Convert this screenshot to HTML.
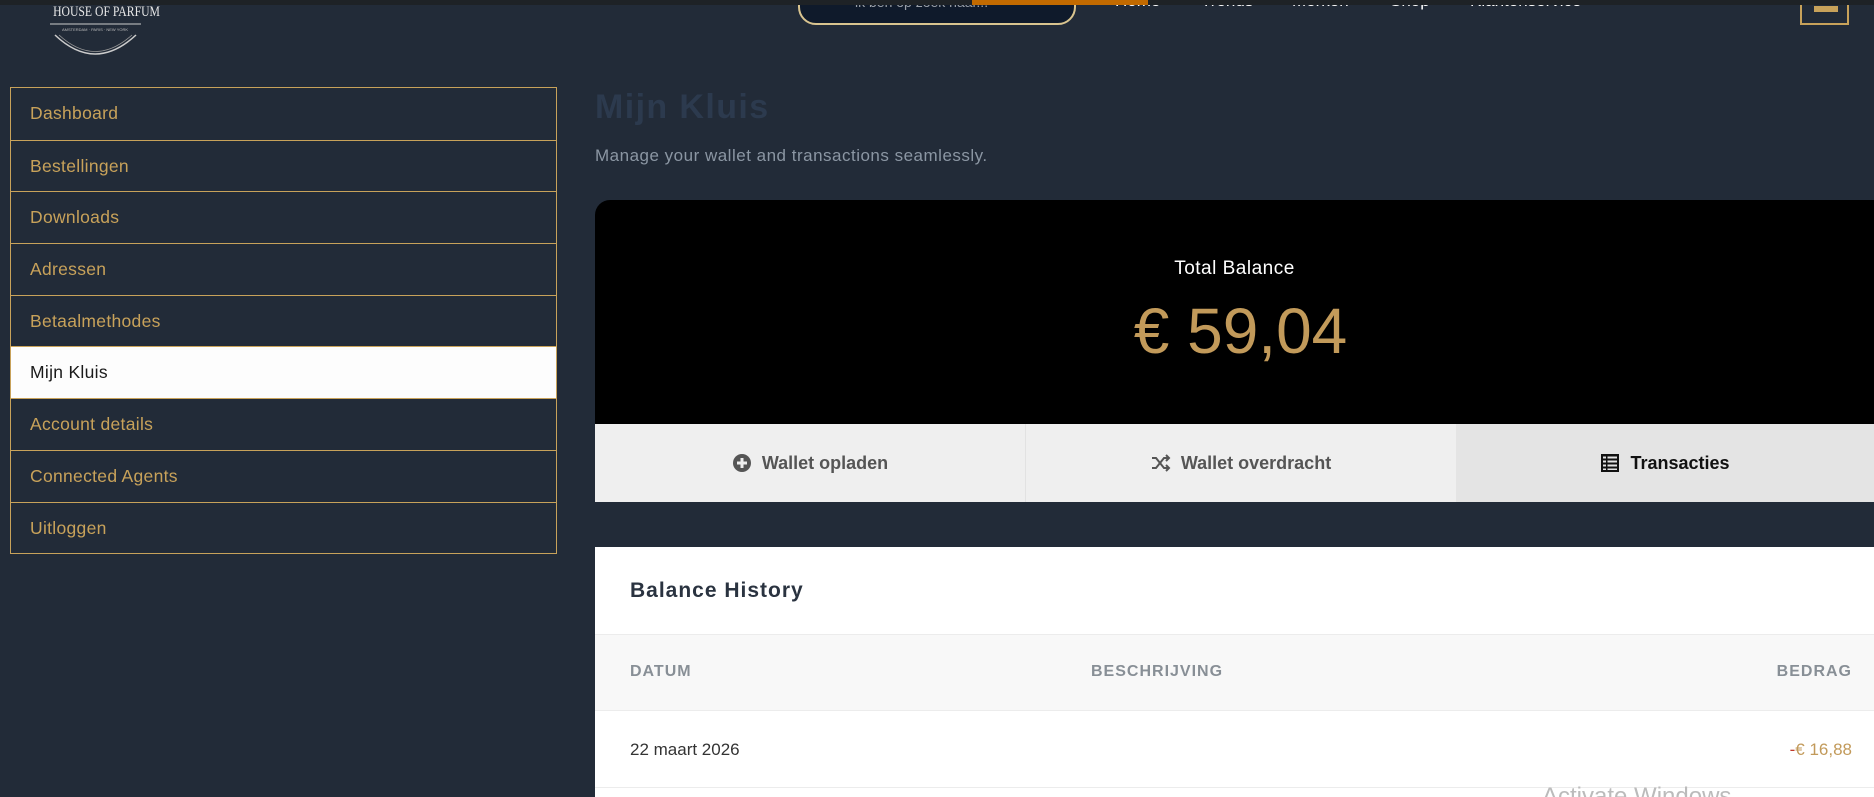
<!DOCTYPE html>
<html><head><meta charset="utf-8">
<style>
*{margin:0;padding:0;box-sizing:border-box}
html,body{width:1874px;height:797px;overflow:hidden}
body{background:#222b38;font-family:"Liberation Sans",sans-serif;position:relative}
.abs{position:absolute}
.topbar{left:0;top:0;width:1874px;height:5px;background:#1e2226;z-index:5}
.orange{left:972px;top:0;width:176px;height:5px;background:#c26a00;z-index:6}
.logo{left:38px;top:4px;width:115px;color:#e8e8e8;font-family:"Liberation Serif",serif;font-size:15px;text-align:center;white-space:nowrap}
.logo span{display:inline-block;transform:scaleX(0.78);transform-origin:center}
.search{left:798px;top:-20px;width:278px;height:45px;border:2px solid #d9c48f;border-radius:18px;background:#0f1a2b;color:#9aa0a8;font-size:14px;padding:12px 0 0 55px}
.nav{top:-9px;color:#fff;font-size:17px}
.ham{left:1800px;top:-10px;width:49px;height:35px;border:2px solid #c8a25a}
.ham i{position:absolute;left:12px;top:14px;width:24px;height:6px;background:#c8a25a}
.side{left:10px;top:87px;width:547px;border:1px solid #c8a25a}
.side div{height:51.7px;border-top:1px solid #c8a25a;color:#c8a25a;font-size:17.5px;padding-left:19px;line-height:50px;letter-spacing:0.3px}
.side div:first-child{border-top:none}
.side div.act{background:#fdfdfd;color:#1a1a1a}
h1{position:absolute;left:595px;top:88px;font-size:34px;color:#2c3a4e;font-weight:bold;letter-spacing:1.4px}
.sub{left:595px;top:146px;font-size:17px;color:#8b96a3;letter-spacing:0.5px}
.card{left:595px;top:200px;width:1279px;height:224px;background:#000;border-radius:15px 0 0 0}
.tb{left:595px;top:258px;width:1279px;text-align:center;color:#fff;font-size:19px;letter-spacing:0.5px}
.amt{left:595px;top:294px;width:1279px;text-align:center;color:#c29a5a;font-size:64px;padding-left:12px}
.btn{top:424px;height:78px;background:#efefef;color:#555;font-size:18px;font-weight:bold;display:flex;align-items:center;justify-content:center;gap:10px}
.hist{left:595px;top:547px;width:1279px;height:260px;background:#fff}
.ht{left:630px;top:579px;font-size:21px;font-weight:bold;color:#2a3340;letter-spacing:1px}
.thead{left:595px;top:634px;width:1279px;height:77px;background:#f8f8f8;border-top:1px solid #ececec;border-bottom:1px solid #ececec}
.th{top:663px;font-size:16px;font-weight:bold;color:#888f96;letter-spacing:1px}
.td{top:740px;font-size:17px;color:#333}
.rowline{left:595px;top:787px;width:1279px;height:1px;background:#ececec}
</style></head><body>
<div class="abs topbar"></div><div class="abs orange"></div>
<div class="abs logo"><span>HOUSE OF PARFUM</span>
<svg width="115" height="40" style="display:block;margin-top:0"><line x1="12" y1="3" x2="103" y2="3" stroke="#ccc" stroke-width="1"/><text x="57" y="10" font-size="4" fill="#bbb" text-anchor="middle" font-family="Liberation Sans">AMSTERDAM · PARIS · NEW YORK</text><path d="M17 14 Q57 52 98 14" fill="none" stroke="#ccc" stroke-width="1.5"/><path d="M21 14 Q57 47 94 14" fill="none" stroke="#999" stroke-width="0.8"/></svg></div>
<div class="abs search"><svg class="abs" style="left:22px;top:4px" width="22" height="16"><circle cx="9" cy="3" r="6" fill="none" stroke="#c8a25a" stroke-width="2.5"/><line x1="13" y1="8" x2="17" y2="14" stroke="#c8a25a" stroke-width="2.5"/></svg>ik ben op zoek naar...</div>
<div class="abs nav" style="left:1115px">Home</div>
<div class="abs nav" style="left:1201px">Trends</div>
<div class="abs nav" style="left:1292px">Merken</div>
<div class="abs nav" style="left:1390px">Shop</div>
<div class="abs nav" style="left:1470px">Klantenservice</div>
<div class="abs ham"><i></i></div>

<div class="abs side">
<div>Dashboard</div><div>Bestellingen</div><div>Downloads</div><div>Adressen</div><div>Betaalmethodes</div><div class="act">Mijn Kluis</div><div>Account details</div><div>Connected Agents</div><div>Uitloggen</div>
</div>

<h1>Mijn Kluis</h1>
<div class="abs sub">Manage your wallet and transactions seamlessly.</div>
<div class="abs card"></div>
<div class="abs tb">Total Balance</div>
<div class="abs amt">€ 59,04</div>

<div class="abs btn" style="left:595px;width:430px"><svg width="20" height="20"><circle cx="10" cy="10" r="9" fill="#555"/><rect x="8.5" y="5" width="3" height="10" fill="#efefef"/><rect x="5" y="8.5" width="10" height="3" fill="#efefef"/></svg>Wallet opladen</div>
<div class="abs btn" style="left:1025px;width:431px;border-left:1px solid #e2e2e2"><svg width="20" height="18" fill="none" stroke="#555" stroke-width="2"><path d="M1 4h4l8 10h5M1 14h4l8-10h5M15 1l3 3-3 3M15 11l3 3-3 3"/></svg>Wallet overdracht</div>
<div class="abs btn" style="left:1456px;width:418px;background:#e4e4e4;color:#111"><svg width="20" height="20"><rect x="1" y="1" width="18" height="18" fill="#111"/><g fill="#e4e4e4"><rect x="3" y="3.5" width="14" height="2"/><rect x="3" y="7.5" width="14" height="2"/><rect x="3" y="11.5" width="14" height="2"/><rect x="3" y="15.5" width="14" height="1.5"/></g><rect x="6" y="1" width="1.5" height="18" fill="#111"/></svg>Transacties</div>

<div class="abs hist"></div>
<div class="abs ht">Balance History</div>
<div class="abs thead"></div>
<div class="abs th" style="left:630px">DATUM</div>
<div class="abs th" style="left:1091px">BESCHRIJVING</div>
<div class="abs th" style="right:22px">BEDRAG</div>
<div class="abs td" style="left:630px">22 maart 2026</div>
<div class="abs td" style="right:22px;color:#c29a5a"><span style="color:#c0392b">-</span>€ 16,88</div>
<div class="abs rowline"></div>
<div class="abs" style="left:1542px;top:783px;font-size:24px;color:#bbb">Activate Windows</div>
</body></html>
